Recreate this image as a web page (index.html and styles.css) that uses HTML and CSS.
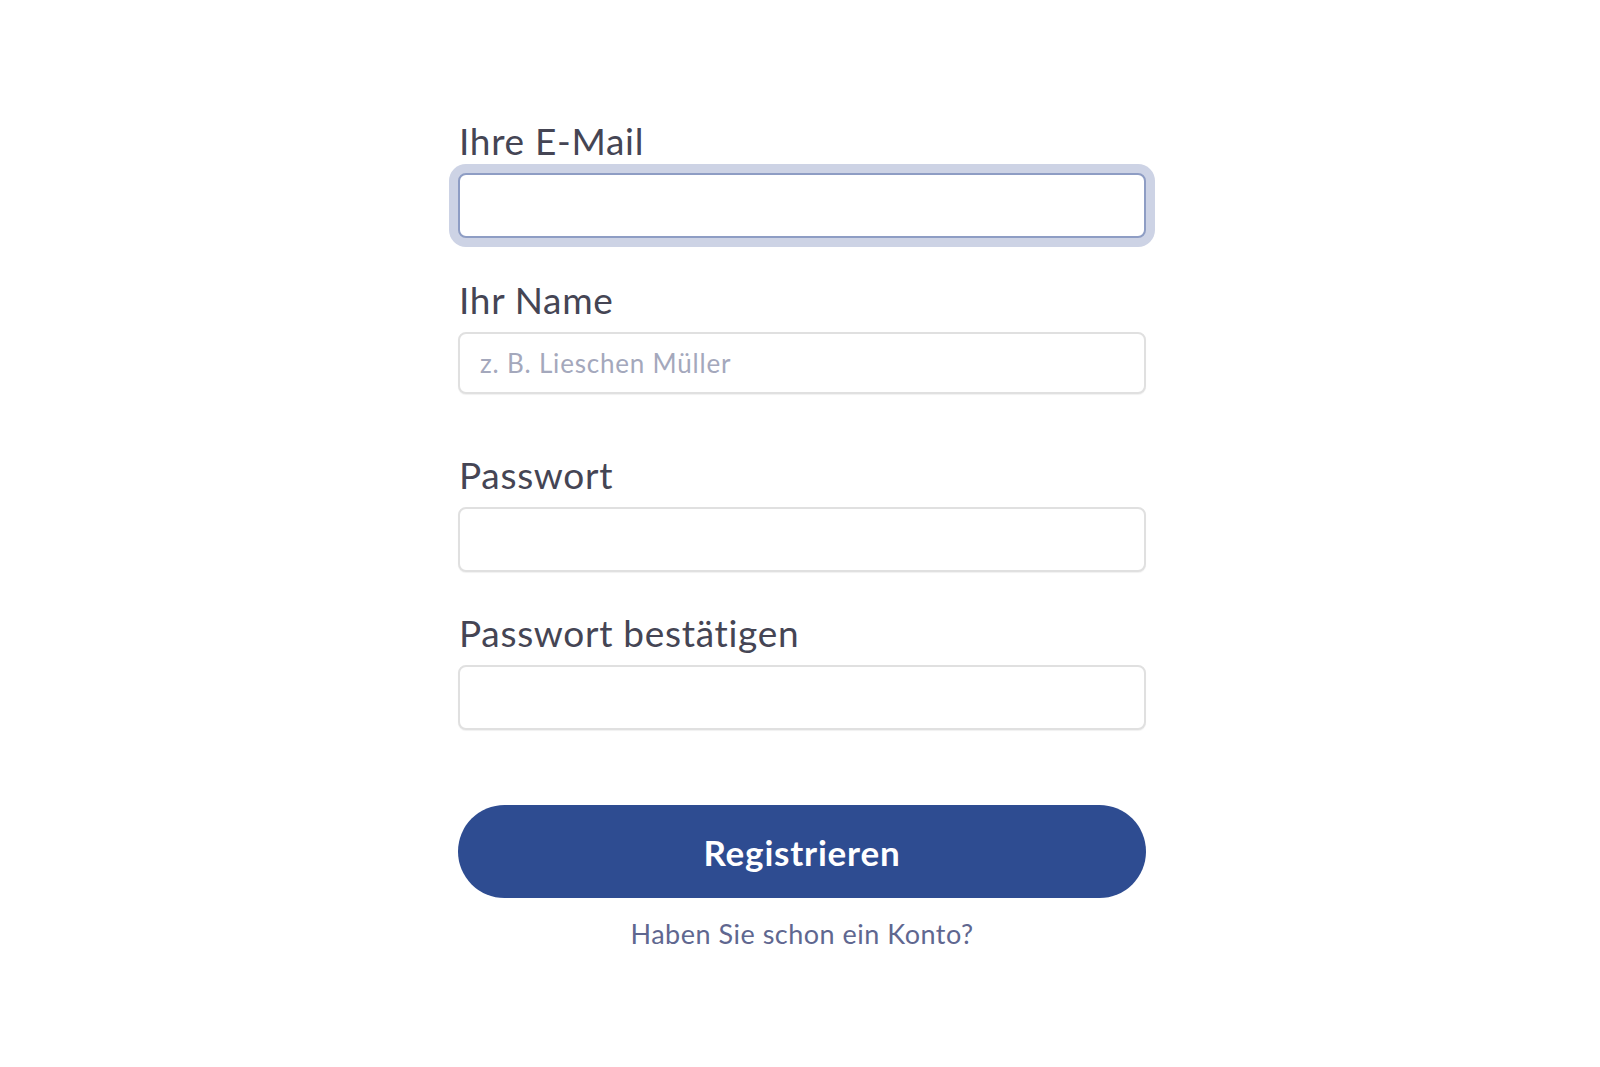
FILE: index.html
```html
<!DOCTYPE html>
<html lang="de">
<head>
<meta charset="utf-8">
<title>Registrieren</title>
<link rel="stylesheet" href="styles.css">
</head>
<body>
<main class="page">
  <form class="form">
    <div class="field field-email">
      <label class="label" for="email">Ihre E-Mail</label>
      <input class="input input-focused" id="email" type="email">
    </div>
    <div class="field field-name">
      <label class="label" for="name">Ihr Name</label>
      <input class="input input-name" id="name" type="text" placeholder="z. B. Lieschen Müller">
    </div>
    <div class="field field-pw">
      <label class="label" for="pw">Passwort</label>
      <input class="input" id="pw" type="password">
    </div>
    <div class="field field-pw2">
      <label class="label" for="pw2">Passwort bestätigen</label>
      <input class="input" id="pw2" type="password">
    </div>
    <button class="btn" type="button">Registrieren</button>
    <a class="link" href="#">Haben Sie schon ein Konto?</a>
  </form>
</main>
</body>
</html>
```

FILE: styles.css
```css
html, body {
  margin: 0;
  padding: 0;
  background: #ffffff;
}
body {
  font-family: Lato, "Open Sans", "Noto Sans", sans-serif;
  width: 1600px;
  height: 1067px;
  overflow: hidden;
}
.page {
  display: flex;
  justify-content: center;
  padding-top: 119px;
}
.form {
  width: 688px;
  margin-left: 4px;
  display: flex;
  flex-direction: column;
}
.field {
  display: flex;
  flex-direction: column;
}
.field-name { margin-top: 40px; }
.field-pw { margin-top: 59px; }
.field-pw2 { margin-top: 39px; }
.label {
  font-size: 37px;
  letter-spacing: 0.7px;
  line-height: 44px;
  height: 44px;
  color: #454554;
  margin-bottom: 10px;
  padding-left: 1px;
}
.input {
  box-sizing: border-box;
  width: 100%;
  height: 65px;
  margin: 0;
  border: 2px solid #e0e0e0;
  border-radius: 8px;
  background: #ffffff;
  box-shadow: 0 1px 1px rgba(0, 0, 0, 0.06);
  padding: 0 20px;
  font-family: Lato, "Open Sans", sans-serif;
  font-size: 26px;
  letter-spacing: 0.8px;
  color: #41414f;
  outline: none;
}
.input-name {
  height: 62px;
}
.input::placeholder {
  color: #a4a8bc;
}
.input-focused {
  border-color: #8e9dc4;
  box-shadow: 0 0 0 9px #cdd3e5;
}
.btn {
  margin-top: 75px;
  height: 93px;
  width: 100%;
  border: none;
  border-radius: 47px;
  background: #2e4c91;
  color: #ffffff;
  font-family: Lato, "Open Sans", sans-serif;
  font-weight: 700;
  font-size: 35px;
  letter-spacing: 0.8px;
  cursor: pointer;
}
.link {
  margin-top: 20px;
  align-self: center;
  font-size: 27px;
  letter-spacing: 0.5px;
  line-height: 32px;
  color: #5f6790;
  text-decoration: none;
}
```
